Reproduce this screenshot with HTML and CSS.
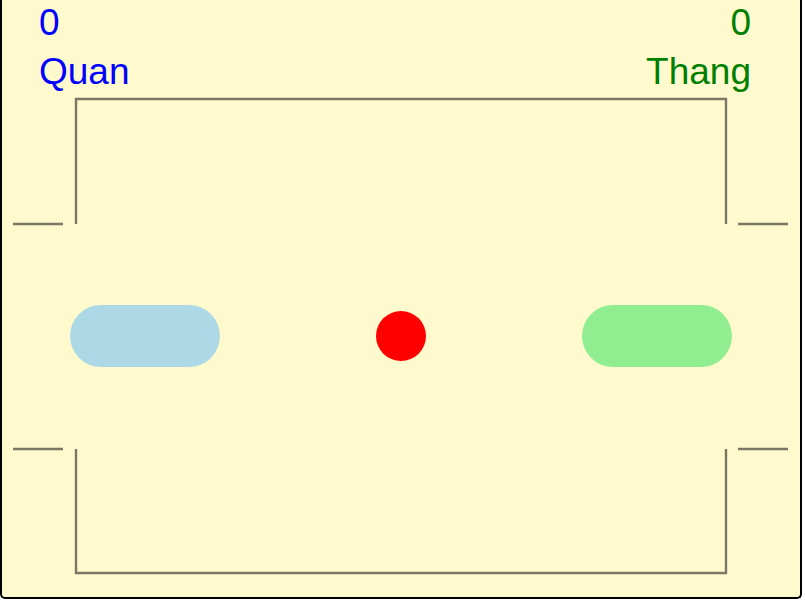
FILE: index.html
```html
<!DOCTYPE html>
<html>
<head>
<meta charset="utf-8">
<link rel="stylesheet" href="styles.css">
</head>
<body>
<div class="frame">
  <svg class="field" viewBox="2 0 798 597" width="798" height="597">
    <g class="lines">
      <path d="M76 224 V99 H726 V224"/>
      <path d="M76 449 V573 H726 V449"/>
      <path d="M13 224 H63 M738 224 H788 M13 449 H63 M738 449 H788"/>
    </g>
    <rect x="70" y="305" width="150" height="62" rx="31" fill="#ADD8E6"/>
    <rect x="582" y="305" width="150" height="62" rx="31" fill="#90EE90"/>
    <circle cx="401" cy="336" r="25" fill="#FF0000"/>
  </svg>
  <div class="scores">
    <div class="player left">
      <div class="score">0</div>
      <div class="name">Quan</div>
    </div>
    <div class="player right">
      <div class="score">0</div>
      <div class="name">Thang</div>
    </div>
  </div>
</div>
</body>
</html>
```

FILE: styles.css
```css
html, body {
  margin: 0;
  padding: 0;
  background: #ffffff;
}
.frame {
  position: relative;
  width: 798px;
  height: 597px;
  background: #FFFACD;
  border: 2px solid #000;
  border-top: 0;
  border-radius: 0 0 5px 5px;
  overflow: hidden;
}
.field {
  position: absolute;
  top: 0;
  left: 0;
  display: block;
}
.lines path {
  fill: none;
  stroke: #7a7864;
  stroke-width: 2.4;
}
.scores {
  position: relative;
  display: flex;
  justify-content: space-between;
  margin-top: -2px;
  padding: 0 49px 0 37px;
  font-family: "Liberation Sans", Arial, sans-serif;
  font-size: 37px;
  line-height: 49px;
}
.left { color: #0000FF; text-align: left; }
.right { color: #008000; text-align: right; }
```
